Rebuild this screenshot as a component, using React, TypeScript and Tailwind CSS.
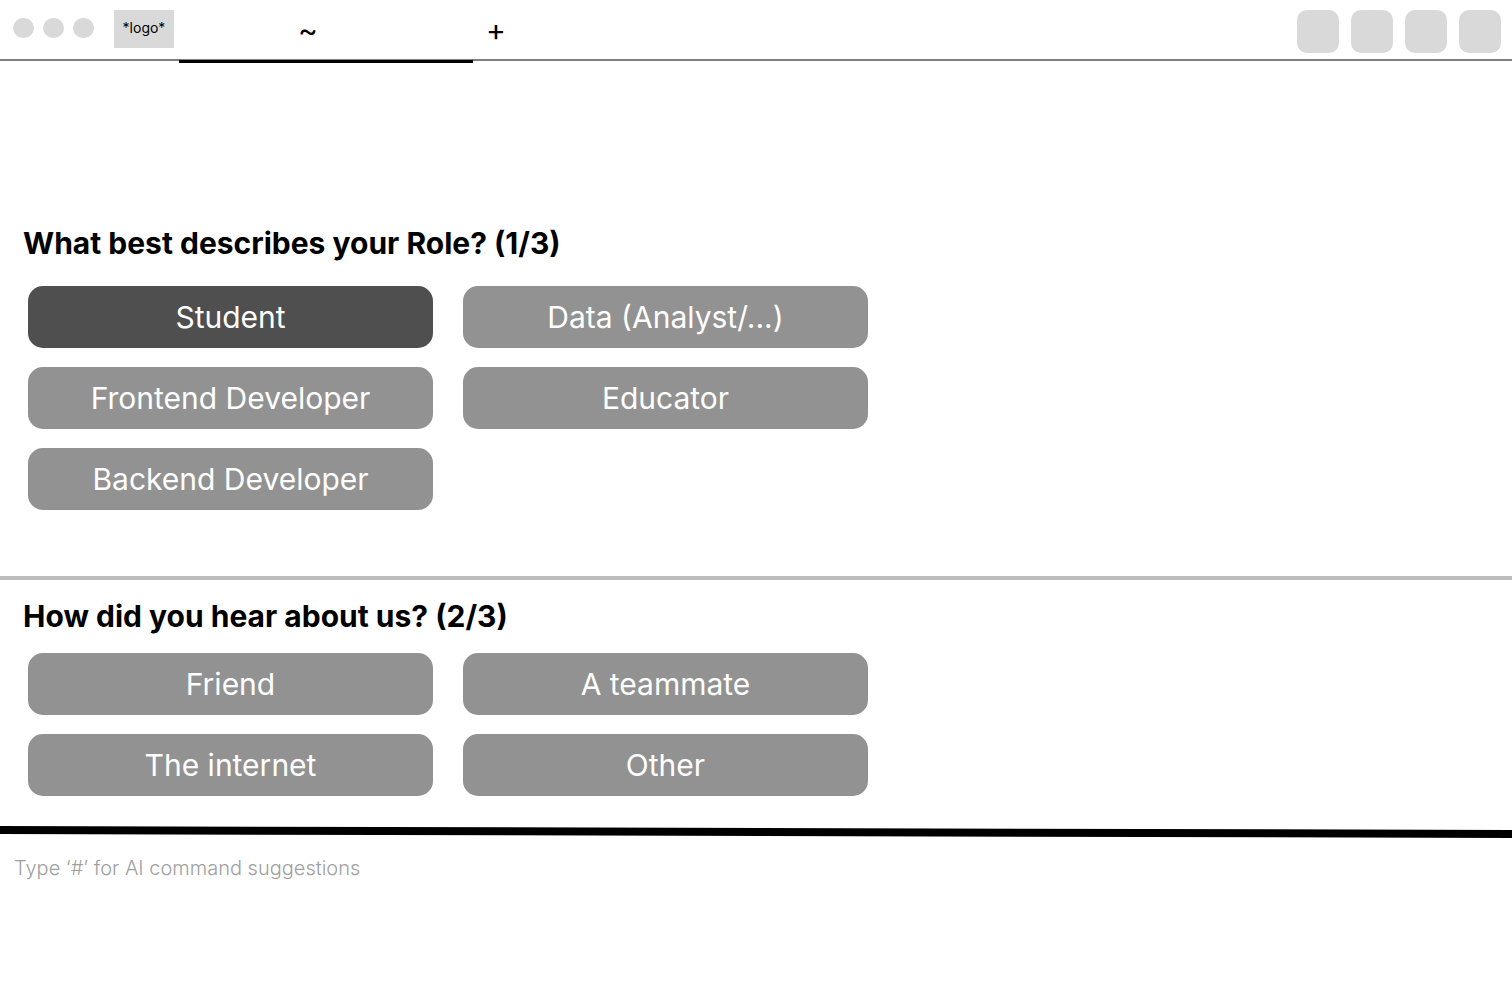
import { useState } from "react";

type Question = {
  id: string;
  title: string;
  columns: string[][];
};

const roleQuestion: Question = {
  id: "role",
  title: "What best describes your Role? (1/3)",
  columns: [
    ["Student", "Frontend Developer", "Backend Developer"],
    ["Data (Analyst/...)", "Educator"],
  ],
};

const sourceQuestion: Question = {
  id: "source",
  title: "How did you hear about us? (2/3)",
  columns: [
    ["Friend", "The internet"],
    ["A teammate", "Other"],
  ],
};

function TopBar() {
  return (
    <header className="flex h-[61px] items-start border-b-2 border-[#808080] pr-[11px] pl-[13px]">
      <div className="flex gap-[9px] pt-[18px]">
        {["Close", "Minimize", "Maximize"].map((name) => (
          <button
            key={name}
            type="button"
            aria-label={name}
            className="h-5 w-[21px] rounded-full bg-[#d9d9d9]"
          />
        ))}
      </div>
      <div className="mt-[10px] ml-5 flex h-[38px] w-[60px] items-start justify-center bg-[#d9d9d9] pt-2 text-sm leading-5">
        *logo*
      </div>
      <nav className="ml-[5px] flex items-stretch self-stretch text-[30px] leading-9">
        <button
          type="button"
          aria-current="page"
          className="relative flex w-[294px] items-center justify-center pr-9"
        >
          ~
          <span className="absolute inset-x-0 -bottom-1 h-[3px] bg-black" />
        </button>
        <button
          type="button"
          aria-label="New tab"
          className="flex w-[46px] items-center justify-center"
        >
          +
        </button>
      </nav>
      <div className="ml-auto flex gap-3 pt-[10px]">
        {[1, 2, 3, 4].map((n) => (
          <button
            key={n}
            type="button"
            aria-label={`Action ${n}`}
            className="h-[43px] w-[42px] rounded-[10px] bg-[#d9d9d9]"
          />
        ))}
      </div>
    </header>
  );
}

function OptionGrid({
  question,
  selected,
  onSelect,
}: {
  question: Question;
  selected: string | null;
  onSelect: (option: string) => void;
}) {
  return (
    <div
      role="group"
      aria-labelledby={question.id}
      className="ml-[5px] grid max-w-[840px] grid-cols-2 gap-[30px]"
    >
      {question.columns.map((options) => (
        <div key={options[0]} className="flex flex-col gap-[19px]">
          {options.map((option) => (
            <button
              key={option}
              type="button"
              aria-pressed={selected === option}
              onClick={() => onSelect(option)}
              className={
                "h-[62px] rounded-[15px] text-[30px] leading-9 text-white " +
                (selected === option ? "bg-[#4f4f4f]" : "bg-[#929292]")
              }
            >
              {option}
            </button>
          ))}
        </div>
      ))}
    </div>
  );
}

export default function App() {
  const [role, setRole] = useState<string | null>("Student");
  const [source, setSource] = useState<string | null>(null);

  return (
    <div className="min-h-screen bg-white font-['Inter',sans-serif] text-black">
      <TopBar />
      <main>
        <section className="flex flex-col gap-[25px] border-b-4 border-[#bdbdbd] px-[23px] pt-[164px] pb-[66px]">
          <h2 id="role" className="text-[30px] leading-9 font-bold">
            {roleQuestion.title}
          </h2>
          <OptionGrid question={roleQuestion} selected={role} onSelect={setRole} />
        </section>
        <section className="flex flex-col gap-[19px] px-[23px] pt-[18px] pb-[30px]">
          <h2 id="source" className="text-[30px] leading-9 font-bold">
            {sourceQuestion.title}
          </h2>
          <OptionGrid question={sourceQuestion} selected={source} onSelect={setSource} />
        </section>
      </main>
      <svg
        className="block h-3 w-full"
        viewBox="0 0 1512 12"
        preserveAspectRatio="none"
        aria-hidden="true"
      >
        <path d="M0 0 L1512 4 V12 L0 8 Z" fill="#000" />
      </svg>
      <footer className="px-[14px] pt-[18px]">
        <input
          type="text"
          aria-label="Command"
          placeholder="Type ‘#’ for AI command suggestions"
          className="h-6 w-full text-xl leading-6 font-light outline-none placeholder:text-[#a0a0a0]"
        />
      </footer>
    </div>
  );
}
